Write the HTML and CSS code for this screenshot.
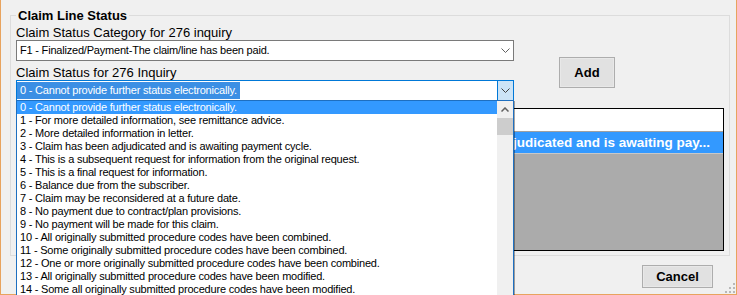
FILE: index.html
```html
<!DOCTYPE html>
<html lang="en">
<head>
    <meta charset="UTF-8">
    <meta name="viewport" content="width=device-width, initial-scale=1.0">
    <title>Claim Line Status</title>
    <link rel="stylesheet" href="styles.css">
</head>
<body>

    <div class="window">
        <fieldset class="group">
            <legend>Claim Line Status</legend>

            <div class="top">
                <div class="fields">
                    <label class="lbl">Claim Status Category for 276 inquiry</label>
                    <div class="combo">
                        <span class="combo-text">F1 - Finalized/Payment-The claim/line has been paid.</span>
                        <span class="combo-btn">
                            <svg width="9" height="5" viewBox="0 0 9 5"><path d="M0.5 0.5 L4.5 4.5 L8.5 0.5" fill="none" stroke="#606060" stroke-width="1"/></svg>
                        </span>
                    </div>

                    <label class="lbl lbl-second">Claim Status for 276 Inquiry</label>
                    <div class="combo focused">
                        <span class="combo-text"><span class="sel-text">0 - Cannot provide further status electronically.</span></span>
                        <span class="combo-btn">
                            <svg width="9" height="5" viewBox="0 0 9 5"><path d="M0.5 0.5 L4.5 4.5 L8.5 0.5" fill="none" stroke="#404040" stroke-width="1"/></svg>
                        </span>

                        <!-- open dropdown -->
                        <div class="droplist">
                            <ul class="items">
                                <li class="active">0 - Cannot provide further status electronically.</li>
                                <li>1 - For more detailed information, see remittance advice.</li>
                                <li>2 - More detailed information in letter.</li>
                                <li>3 - Claim has been adjudicated and is awaiting payment cycle.</li>
                                <li>4 - This is a subsequent request for information from the original request.</li>
                                <li>5 - This is a final request for information.</li>
                                <li>6 - Balance due from the subscriber.</li>
                                <li>7 - Claim may be reconsidered at a future date.</li>
                                <li>8 - No payment due to contract/plan provisions.</li>
                                <li>9 - No payment will be made for this claim.</li>
                                <li>10 - All originally submitted procedure codes have been combined.</li>
                                <li>11 - Some originally submitted procedure codes have been combined.</li>
                                <li>12 - One or more originally submitted procedure codes have been combined.</li>
                                <li>13 - All originally submitted procedure codes have been modified.</li>
                                <li>14 - Some all originally submitted procedure codes have been modified.</li>
                                <li>15 - One or more originally submitted procedure codes have been modified.</li>
                            </ul>
                            <div class="scrollbar">
                                <div class="scroll-up">
                                    <svg width="8" height="5" viewBox="0 0 8 5"><path d="M0.5 4.5 L4 1 L7.5 4.5" fill="none" stroke="#606060" stroke-width="1.5"/></svg>
                                </div>
                                <div class="scroll-thumb"></div>
                            </div>
                        </div>
                    </div>
                </div>

                <div class="add-wrap">
                    <button type="button" class="btn btn-add">Add</button>
                </div>
            </div>

            <div class="grid">
                <div class="grid-head"></div>
                <div class="grid-row">3 - Claim has been adjudicated and is awaiting pay...</div>
            </div>
        </fieldset>

        <div class="footer">
            <button type="button" class="btn btn-cancel">Cancel</button>
        </div>

        <svg class="grip" width="10" height="10" viewBox="0 0 10 10">
            <rect x="8" y="0" width="2" height="2" fill="#b8b8b8"/>
            <rect x="4" y="4" width="2" height="2" fill="#b8b8b8"/>
            <rect x="8" y="4" width="2" height="2" fill="#b8b8b8"/>
            <rect x="0" y="8" width="2" height="2" fill="#b8b8b8"/>
            <rect x="4" y="8" width="2" height="2" fill="#b8b8b8"/>
            <rect x="8" y="8" width="2" height="2" fill="#b8b8b8"/>
        </svg>
    </div>

</body>
</html>
```

FILE: styles.css
```css
html, body {
    margin: 0;
    overflow: hidden;
}
body {
    font-family: "Liberation Sans", Arial, sans-serif;
    background-color: #f0f0f0;
    color: #000;
}
.window {
    position: relative;
    width: 737px;
    height: 295px;
    box-sizing: border-box;
    border: 1px solid #e8a35e;
    border-top: none;
    background-color: #f0f0f0;
    padding-top: 8px;
}
.group {
    margin: 0 0 0 9px;
    width: 720px;
    box-sizing: border-box;
    border: 1px solid #dcdcdc;
    padding: 2px 5px 4px 5px;
}
.group legend {
    font-size: 13px;
    font-weight: bold;
    line-height: 15px;
    padding: 0 2px;
}
.top {
    display: flex;
}
.fields {
    width: 498px;
}
.lbl {
    display: block;
    font-size: 13px;
    line-height: 15px;
}
.lbl-second {
    margin-top: 4px;
}
.combo {
    position: relative;
    display: flex;
    height: 21px;
    box-sizing: border-box;
    border: 1px solid #7a7a7a;
    background-color: #fff;
    font-size: 11px;
    letter-spacing: -0.2px;
}
.combo-text {
    flex: 1;
    padding-left: 3px;
    line-height: 19px;
    white-space: nowrap;
    overflow: hidden;
}
.combo-btn {
    width: 16px;
    display: flex;
    align-items: center;
    justify-content: center;
    box-sizing: border-box;
}
.combo.focused {
    border-color: #0078d7;
}
.combo.focused .combo-text {
    padding-left: 0;
}
.combo.focused .combo-btn {
    background-color: #cce4f7;
    border-left: 1px solid #0078d7;
}
.sel-text {
    display: inline-block;
    margin-top: 1px;
    padding: 0 3px;
    height: 17px;
    line-height: 17px;
    background-color: #3b8fe4;
    color: #fff;
}
.droplist {
    position: absolute;
    top: 100%;
    left: -1px;
    width: 498px;
    height: 200px;
    box-sizing: border-box;
    border: 1px solid #1e6fc0;
    background-color: #fff;
    display: flex;
    box-shadow: 1px 1px 0 rgba(0, 0, 0, 0.35);
    z-index: 5;
}
.items {
    list-style: none;
    margin: 0;
    padding: 0;
    flex: 1;
    overflow: hidden;
}
.items li {
    height: 13px;
    line-height: 13px;
    padding-left: 3px;
    white-space: nowrap;
}
.items li.active {
    background-color: #3399ff;
    color: #fff;
}
.scrollbar {
    width: 16px;
    background-color: #f0f0f0;
}
.scroll-up {
    height: 17px;
    display: flex;
    align-items: center;
    justify-content: center;
}
.scroll-thumb {
    height: 17px;
    background-color: #cdcdcd;
}
.add-wrap {
    padding-top: 32px;
    margin-left: 45px;
}
.btn {
    font-family: "Liberation Sans", Arial, sans-serif;
    font-size: 13px;
    font-weight: bold;
    color: #000;
    background-color: #e1e1e1;
    border: 1px solid #adadad;
    box-shadow: inset 0 0 0 1px #e8e8e8;
    padding: 0;
    cursor: pointer;
}
.btn-add {
    width: 56px;
    height: 31px;
}
.grid {
    margin-top: 7px;
    height: 143px;
    width: 708px;
    box-sizing: border-box;
    border: 1px solid #000;
    background-color: #ababab;
}
.grid-head {
    height: 22px;
    background-color: #fff;
    border-bottom: 1px solid #a0a0a0;
}
.grid-row {
    height: 21px;
    line-height: 21px;
    background-color: #3399ff;
    border-bottom: 1px solid #c8c8c8;
    color: #fff;
    font-size: 13.5px;
    font-weight: bold;
    text-align: right;
    padding-right: 13px;
    white-space: nowrap;
    overflow: hidden;
}
.footer {
    display: flex;
    justify-content: flex-end;
    margin-top: 9px;
    padding-right: 23px;
}
.btn-cancel {
    width: 71px;
    height: 23px;
}
.grip {
    position: absolute;
    right: 1px;
    bottom: 1px;
}
```
